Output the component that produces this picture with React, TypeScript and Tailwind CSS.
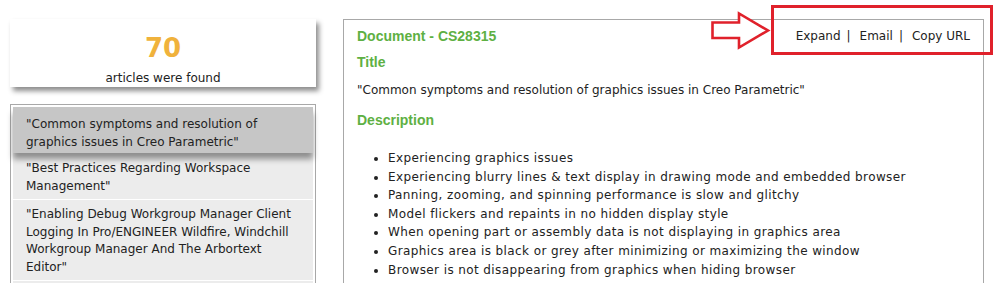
import React from 'react'

const font = { fontFamily: '"DejaVu Sans", "Liberation Sans", sans-serif' }
const headFont = { fontFamily: '"Liberation Sans", Arial, sans-serif' }

const articles = [
  '"Common symptoms and resolution of graphics issues in Creo Parametric"',
  '"Best Practices Regarding Workspace Management"',
  '"Enabling Debug Workgroup Manager Client Logging In Pro/ENGINEER Wildfire, Windchill Workgroup Manager And The Arbortext Editor"',
]

const symptoms = [
  'Experiencing graphics issues',
  'Experiencing blurry lines & text display in drawing mode and embedded browser',
  'Panning, zooming, and spinning performance is slow and glitchy',
  'Model flickers and repaints in no hidden display style',
  'When opening part or assembly data is not displaying in graphics area',
  'Graphics area is black or grey after minimizing or maximizing the window',
  'Browser is not disappearing from graphics when hiding browser',
]

const itemClass = [
  'relative bg-[#c6c6c6] pt-[8px] pb-[2px] pr-[20px] pl-[13px] text-[12px] leading-[18px] shadow-[0_6px_6px_rgba(0,0,0,0.4)]',
  'border-b border-white pt-[7px] pb-[4px] pr-[12px] pl-[13px] text-[12px] leading-[17.5px]',
  'border-b border-white pt-[6px] pb-[4px] pr-[12px] pl-[13px] text-[12px] leading-[17.5px]',
]

export default function App() {
  return (
    <div className="relative h-[283px] w-[999px] overflow-hidden bg-white text-[#222]" style={font}>
      <div className="flex pt-[19px] pl-[10px]">
        {/* left column */}
        <div className="flex w-[306px] flex-col gap-[17px]">
          <div className="flex h-[68px] flex-col items-center bg-white shadow-[3px_4px_5px_rgba(0,0,0,0.45)]">
            <div className="mt-[13px] text-[26px] font-bold leading-[32px] text-[#f0b23c]">70</div>
            <div className="mt-[6px] text-[12px] leading-[16px]">articles were found</div>
          </div>
          <div className="h-[200px] border border-[#a8a8a8] p-[2px]">
            <div className="h-full bg-[#ececec]">
              {articles.map((a, i) => (
                <div key={i} className={itemClass[i]}>
                  {a}
                </div>
              ))}
            </div>
          </div>
        </div>

        {/* right panel */}
        <div className="ml-[27px] h-[300px] w-[641px] border border-[#a8a8a8] pt-[6px] pr-[13px] pl-[13px]">
          <div className="flex items-center justify-between">
            <div className="text-[14px] font-bold leading-[20px] text-[#5eb043]" style={headFont}>
              Document - CS28315
            </div>
            <div className="flex text-[12px] leading-[20px]">
              <span>Expand</span>
              <span className="mr-[9px] ml-[6px]">|</span>
              <span>Email</span>
              <span className="mr-[9px] ml-[6px]">|</span>
              <span>Copy URL</span>
            </div>
          </div>
          <div className="mt-[6px] text-[14px] font-bold leading-[20px] text-[#5eb043]" style={headFont}>
            Title
          </div>
          <div className="mt-[8px] text-[12px] leading-[20px]">
            "Common symptoms and resolution of graphics issues in Creo Parametric"
          </div>
          <div className="mt-[10px] text-[14px] font-bold leading-[20px] text-[#5eb043]" style={headFont}>
            Description
          </div>
          <ul className="mt-[19px] list-disc pl-[31px] text-[12px] leading-[18.6px] tracking-[0.4px]">
            {symptoms.map((s) => (
              <li key={s}>{s}</li>
            ))}
          </ul>
        </div>
      </div>

      {/* red annotation */}
      <div className="absolute top-[5px] left-[771px] h-[50px] w-[222px] border-[3px] border-[#e0212b]" />
      <svg className="absolute top-[11px] left-[710px]" width="62" height="40" viewBox="0 0 62 40">
        <path
          d="M2.5 11.5 H29 V2.5 L58 19.5 L29 36.5 V27 H2.5 Z"
          fill="white"
          stroke="#e0212b"
          strokeWidth="2.6"
          strokeLinejoin="miter"
        />
      </svg>
    </div>
  )
}
